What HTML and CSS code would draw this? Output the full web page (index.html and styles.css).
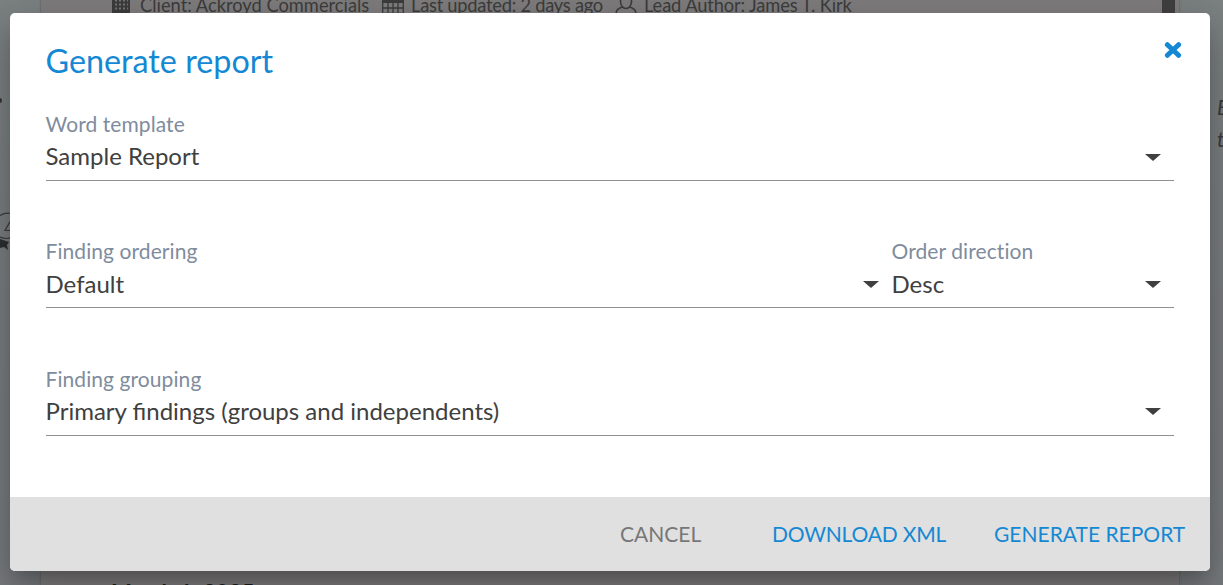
FILE: index.html
```
<!DOCTYPE html>
<html lang="en">
<head>
<meta charset="utf-8">
<title>Generate report</title>
<link rel="stylesheet" href="styles.css">
</head>
<body>
<div class="page">
  <div class="sheet">
    <div class="meta">
      <svg width="20" height="20" viewBox="0 0 20 20"><path fill="currentColor" d="M1 0h18v20H1z"/><path stroke="#777" stroke-width="2" stroke-dasharray="2 2" d="M4 5.500h13M4 9.500h13M4 13.500h13"/></svg>
      <span class="m-client">Client: Ackroyd Commercials</span>
      <svg width="22" height="20" viewBox="0 0 22 20"><path fill="currentColor" d="M0 2h22v6H0z"/><path fill="none" stroke="currentColor" stroke-width="1.300" d="M.7 8v10.300h20.600V8M1 13h20M6 8v10M11 8v10M16 8v10"/></svg>
      <span class="m-date">Last updated: 2 days ago</span>
      <svg width="22" height="20" viewBox="0 0 22 20"><path fill="none" stroke="currentColor" stroke-width="1.600" d="M7.500 12c-4 1-6.500 3-6.500 7M14.500 12c4 1 6.500 3 6.500 7"/><ellipse cx="11" cy="6.500" rx="5.500" ry="7" fill="none" stroke="currentColor" stroke-width="1.600"/></svg>
      <span class="m-author">Lead Author: James T. Kirk</span>
    </div>
    <div class="bar"></div>
    <div class="day">March 1, 2025</div>
  </div>
  <div class="dot"></div>
  <svg class="badge" width="12" height="42" viewBox="0 0 12 42"><g fill="none" stroke="#3b3c3d" stroke-width="1.200"><path d="M0 5.500Q5 2 12 3.500M0 27Q7 30 12 27"/><path d="M11 10L5 20.500h6"/></g><path fill="#2e2f30" d="M0 29l9 3-2 3 1 5-4-3-4 1z"/></svg>
  <div class="aside">E<br>t</div>
</div>
<div class="dialog" role="dialog">
  <div class="content">
    <header class="head">
      <h1>Generate report</h1>
      <svg class="close" width="18" height="18" viewBox="0 0 18 18"><path stroke="currentColor" stroke-width="5" stroke-linecap="round" d="M3.400 3.700l11.200 10.600M14.600 3.700L3.400 14.300"/></svg>
    </header>
    <div class="row">
      <div class="field"><label>Word template</label><div class="value">Sample Report<i></i></div></div>
    </div>
    <div class="row">
      <div class="field"><label>Finding ordering</label><div class="value lower">Default<i></i></div></div>
      <div class="field narrow"><label>Order direction</label><div class="value lower">Desc<i></i></div></div>
    </div>
    <div class="row">
      <div class="field"><label>Finding grouping</label><div class="value">Primary findings (groups and independents)<i></i></div></div>
    </div>
  </div>
  <footer>
    <span class="cancel">CANCEL</span><span class="download">DOWNLOAD XML</span><span class="generate">GENERATE REPORT</span>
  </footer>
</div>
</body>
</html>
```
FILE: styles.css
```
* { box-sizing: border-box; }
body { margin: 0; width: 1223px; height: 585px; overflow: hidden; position: relative; font-family: Lato, sans-serif; font-variant-ligatures: none; }
.page { position: absolute; inset: 0; overflow: hidden; background: linear-gradient(#7c8282, #7b7f81 35%, #797c7f); }
.sheet { position: relative; margin: 0 44px 0 41px; height: 585px; background: #7f7d7d; box-shadow: 0 0 2px #555; color: #3d3d3d; }
.meta { position: absolute; left: 70px; top: -8px; height: 26px; display: flex; align-items: center; font-size: 18.300px; line-height: 26px; white-space: nowrap; }
.meta svg { flex: none; }
.m-client { width: 229px; margin: 0 13px 0 9px; }
.m-date { width: 191px; margin: 0 13px 0 7px; letter-spacing: -.25px; }
.m-author { margin-left: 7px; letter-spacing: -.12px; }
.bar { position: absolute; left: 1121px; top: 0; width: 13px; height: 40px; background: #414141; }
.day { position: absolute; left: 70px; top: 578px; font-size: 22.200px; line-height: 29px; font-weight: 700; color: #1b1b1b; white-space: nowrap; }
.dot { position: absolute; left: -3px; top: 98px; width: 5px; height: 5px; border-radius: 50%; background: #353535; }
.badge { position: absolute; left: 0; top: 210px; }
.aside { position: absolute; left: 1217px; top: 91px; font-size: 21px; line-height: 32px; font-style: italic; color: #393c3d; }
.dialog { position: absolute; left: 10px; top: 13px; width: 1200px; height: 558px; border-radius: 5px; overflow: hidden; background: #fff; display: flex; flex-direction: column; box-shadow: 0 11px 15px -7px rgba(0,0,0,.2), 0 24px 38px 3px rgba(0,0,0,.14), 0 9px 46px 8px rgba(0,0,0,.12); }
.content { height: 484px; padding: 0 36px 0 35.500px; }
.head { display: flex; justify-content: space-between; height: 97px; padding-top: 28px; color: #1588d4; }
h1 { margin: 0; font-size: 32.300px; line-height: 40px; font-weight: 400; }
.close { margin-right: -8px; }
.row { display: flex; height: 127.400px; }
.field { flex: 1; height: 71px; border-bottom: 1px solid #909090; }
.narrow { flex: 0 0 282.500px; }
label { display: block; font-size: 21px; line-height: 28px; color: #7f8c9d; letter-spacing: .08px; }
.value { display: flex; align-items: center; justify-content: space-between; font-size: 24px; line-height: 34px; height: 34px; color: #404040; margin-top: 1px; font-variant-ligatures: normal; }
.value.lower { margin-top: 1.600px; }
.value i { margin: 2px 13px 0 0; border: 8px solid transparent; border-top: 7px solid #404040; border-bottom: 0; }
footer { height: 74px; display: flex; align-items: center; background: #e0e0e0; color: #1588d4; font-size: 21px; line-height: 28px; white-space: nowrap; }
.cancel { margin-left: 610px; width: 152px; color: #777; }
.download { width: 222px; letter-spacing: -.18px; }
```
